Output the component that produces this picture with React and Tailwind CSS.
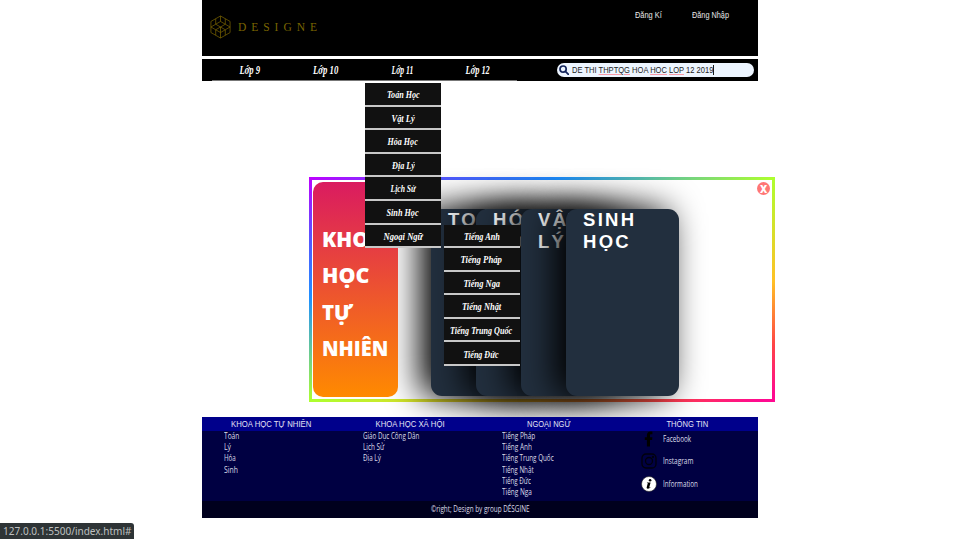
import React, { useLayoutEffect, useRef, useState } from "react";

/* Text squeezed or stretched horizontally to a fixed width. */
function Fit({ w, center = false, className = "", children }) {
  const ref = useRef(null);
  const [scale, setScale] = useState(1);
  useLayoutEffect(() => {
    if (ref.current) setScale(w / ref.current.offsetWidth);
  }, [w]);
  return (
    <span
      ref={ref}
      className={`inline-block whitespace-nowrap ${center ? "origin-center" : "origin-left"} ${className}`}
      style={{ transform: `scaleX(${scale})` }}
    >
      {children}
    </span>
  );
}

const script = "font-['Liberation_Serif',serif] font-bold italic text-white";

const grades = [["Lớp 9", 21], ["Lớp 10", 25], ["Lớp 11", 22], ["Lớp 12", 24]];
const subjects = [
  ["Toán Học", 33], ["Vật Lý", 23], ["Hóa Học", 30], ["Địa Lý", 23],
  ["Lịch Sử", 25], ["Sinh Học", 32], ["Ngoại Ngữ", 39],
];
const languages = [
  ["Tiếng Anh", 36], ["Tiếng Pháp", 41], ["Tiếng Nga", 37],
  ["Tiếng Nhật", 39], ["Tiếng Trung Quốc", 62], ["Tiếng Đức", 35],
];
const cards = [["TOÁN", "HỌC"], ["HÓA", "HỌC"], ["VẬT", "LÝ"], ["SINH", "HỌC"]];
const columns = [
  { title: "KHOA HỌC TỰ NHIÊN", w: 80, items: [["Toán", 15], ["Lý", 7], ["Hóa", 12], ["Sinh", 14]] },
  { title: "KHOA HỌC XÃ HỘI", w: 69, items: [["Giáo Dục Công Dân", 56], ["Lịch Sử", 21], ["Địa Lý", 18]] },
  {
    title: "NGOẠI NGỮ", w: 44,
    items: [["Tiếng Pháp", 33], ["Tiếng Anh", 30], ["Tiếng Trung Quốc", 52], ["Tiếng Nhật", 32], ["Tiếng Đức", 29], ["Tiếng Nga", 30]],
  },
];

function Logo() {
  return (
    <svg className="h-[26px] w-[23px]" viewBox="0 0 24 26" fill="none" stroke="#7a6500" strokeWidth="0.75">
      <path d="M12 1.500 22 7.200v11.600L12 24.500 2 18.800V7.200z" />
      <path d="M12 1.500v5.700M7 4.400v5.700l5 2.900 5-2.900V4.400M7 10.100l5-2.900 5 2.900M2 13l5-2.900M22 13l-5-2.900M2 13l5 2.900 5-2.900 5 2.900 5-2.900M7 15.900v5.700M17 15.900v5.700M7 15.900l5 2.900 5-2.900M12 18.800v5.700M12 13v5.800" />
    </svg>
  );
}

function Menu({ items, className }) {
  return (
    <ul className={`w-[76px] ${className}`}>
      {items.map(([label, w]) => (
        <li key={label} className="flex h-[23.6px] items-center justify-center border-b-2 border-[#c8c8c8] bg-[#111] pt-[1.5px]">
          <Fit w={w} center className={`${script} text-[11px] leading-none`}>{label}</Fit>
        </li>
      ))}
    </ul>
  );
}

function FacebookIcon() {
  return (
    <svg className="h-4 w-4" viewBox="0 0 16 16" fill="#000">
      <path d="M5.900 15.500V9.100H3.800V6.200h2.100V4.300C5.900 2 7.300.6 9.500.6c.9 0 1.700.1 1.900.1v2.500h-1.300c-1 0-1.100.5-1.100 1.200v1.800h2.400l-.3 2.900H9v6.400z" />
    </svg>
  );
}

function InstagramIcon() {
  return (
    <svg className="h-4 w-4" viewBox="0 0 16 16" fill="none" stroke="#00000c" strokeWidth="1.300">
      <rect x="1" y="1" width="14" height="14" rx="4" />
      <circle cx="8" cy="8" r="3.500" />
      <circle cx="12" cy="4" r="0.5" />
    </svg>
  );
}

function InfoIcon() {
  return (
    <svg className="h-4 w-4" viewBox="0 0 16 16">
      <circle cx="8" cy="8" r="7.500" fill="#fff" stroke="#222" strokeWidth="0.6" />
      <circle cx="9.100" cy="4.200" r="1.300" fill="#000" />
      <path d="M6 6.500h3.600L8.300 11.300c0 .4.300.3 1-.3l.2.300c-.9 1.100-1.800 1.500-2.700 1.400-1-.1-1.300-.8-1.100-1.500l1-3.600c.1-.5-.1-.6-.8-.6z" fill="#000" />
    </svg>
  );
}

const socials = [["Facebook", 28, FacebookIcon], ["Instagram", 30, InstagramIcon], ["Information", 35, InfoIcon]];

export default function App() {
  return (
    <div className="relative h-[539px] w-[960px] overflow-hidden bg-white font-['Liberation_Sans',sans-serif]">
      <div className="mx-auto w-[556px]">
        <header className="flex h-14 justify-between bg-black">
          <div className="flex h-[54px] items-center pl-[7px]">
            <Logo />
            <div className="ml-[6px] flex w-[79px] justify-between pt-[2px] font-['Liberation_Serif',serif] text-[11.5px] leading-none text-[#7a6500]">
              {"DESIGNE".split("").map((c, i) => <span key={i}>{c}</span>)}
            </div>
          </div>
          <div className="flex gap-[30px] pt-[10px] pr-[29px] text-[8.5px] leading-[10px] text-[#e8e8e8]">
            <div className="w-[27px]"><Fit w={27}>Đăng Kí</Fit></div>
            <div className="w-[37px]"><Fit w={37}>Đăng Nhập</Fit></div>
          </div>
        </header>

        <nav className="relative mt-[3px] flex h-[22px] items-center justify-between bg-black">
          <ul className="ml-[10px] flex h-full w-[305px] border-b border-[#777]">
            {grades.map(([g, w]) => (
              <li key={g} className="flex w-[76px] items-center justify-center pt-[2px]">
                <Fit w={w} center className={`${script} text-[11.5px] leading-none`}>{g}</Fit>
              </li>
            ))}
          </ul>
          <div className="mr-1 flex h-[14px] w-[197px] items-center rounded-full bg-[#edf5ff] pl-[2px]">
            <svg className="h-[10px] w-[10px]" viewBox="0 0 10 10" fill="none" stroke="#14255c" strokeWidth="1.700">
              <circle cx="4.100" cy="4.100" r="3.100" />
              <path d="m6.400 6.400 3 3" strokeLinecap="round" />
            </svg>
            <Fit w={142} className="ml-[2.5px] text-[8.5px] leading-[10px] text-[#222]">
              DE THI <u className="decoration-[#f79aa8]">THPTQG</u> HOA <u className="decoration-[#f79aa8]">HOC</u>{" "}
              <u className="decoration-[#f79aa8]">LOP</u> 12 2019<span className="border-r border-black" />
            </Fit>
          </div>
          <Menu items={subjects} className="absolute top-6 left-[163px] z-20" />
          <Menu items={languages} className="absolute top-[165.5px] left-[241.5px] z-20" />
        </nav>

        <section className="relative mt-24 ml-[106.5px] h-[225px] w-[466.5px] bg-[linear-gradient(to_bottom_right,#bf00ff_0%,#5555ff_14%,#1e90ff_27%,#adff2f_50%,#ffc125_73%,#ff4545_87%,#ff0a90_98%)] p-[3px]">
          <div className="flex h-full bg-white">
            <div className="relative z-10 mt-[2px] ml-[1.5px] flex h-[215px] w-[85px] flex-col rounded-[10px] bg-[linear-gradient(#da1b60,#ff8a00)] pt-[38.5px] pl-[9px] font-['Open_Sans',sans-serif] text-[20.5px] leading-[36.5px] font-extrabold text-white">
              <Fit w={62} className="self-start">KHOA</Fit>
              <Fit w={47} className="self-start">HỌC</Fit>
              <Fit w={31} className="self-start">TỰ</Fit>
              <Fit w={66} className="self-start">NHIÊN</Fit>
            </div>
            <div className="mt-[29px] ml-[33px] flex">
              {cards.map((lines, i) => (
                <div key={i} className="relative -mr-[67.5px] h-[187px] w-[112.5px] rounded-[11px] bg-[#222f3e] pl-[17px] text-[18.5px] leading-[21.5px] font-bold tracking-[2.3px] text-white shadow-[-11px_0_34px_#000]">
                  {lines.map((l) => <div key={l}>{l}</div>)}
                </div>
              ))}
            </div>
          </div>
          <button className="absolute top-[5px] right-[5px] flex h-[13px] w-[13px] items-center justify-center rounded-full bg-[#ff7675] font-['Open_Sans',sans-serif] text-[10px] leading-none font-extrabold text-white">
            X
          </button>
        </section>

        <footer className="relative mt-[15px] bg-[#000042] text-white">
          <div className="grid h-[84px] grid-cols-4 bg-[linear-gradient(#00008b_14.5px,#000042_14.5px)]">
            {columns.map((c) => (
              <div key={c.title}>
                <h3 className="h-[14px] pr-[1px] text-center text-[8.5px] leading-[14px] text-[#e4e4f4]">
                  <Fit w={c.w} center>{c.title}</Fit>
                </h3>
                <ul className="pl-[22px] font-['Open_Sans',sans-serif] text-[8.8px] leading-[11.2px] text-[#dcdce8]">
                  {c.items.map(([t, w]) => <li key={t} className="flex h-[11.2px]"><Fit w={w}>{t}</Fit></li>)}
                </ul>
              </div>
            ))}
            <div>
              <h3 className="h-[14px] pr-[2px] text-center text-[8.5px] leading-[14px] text-[#e4e4f4]">
                <Fit w={42} center>THÔNG TIN</Fit>
              </h3>
              <ul className="pl-[22px] font-['Open_Sans',sans-serif] text-[8.8px] text-[#dcdce8]">
                {socials.map(([t, w, Icon]) => (
                  <li key={t} className="flex h-[22.4px] items-start gap-[6px]">
                    <Icon />
                    <Fit w={w} className="leading-[17px]">{t}</Fit>
                  </li>
                ))}
              </ul>
            </div>
          </div>
          <div className="h-[17px] bg-[#00001e] text-center font-['Open_Sans',sans-serif] text-[8.8px] leading-[17px] text-[#dcdce8]">
            <Fit w={99} center>©right; Design by group DÉSGINE</Fit>
          </div>
        </footer>
      </div>
      <div className="absolute bottom-0 left-0 h-4 w-[134px] rounded-tr-[3px] bg-[#2e3436] pl-[3px] font-['Noto_Sans',sans-serif] text-[10.5px] leading-4 text-[#bfc0c0]">
        <Fit w={129}>127.0.0.1:5500/index.html#</Fit>
      </div>
    </div>
  );
}
